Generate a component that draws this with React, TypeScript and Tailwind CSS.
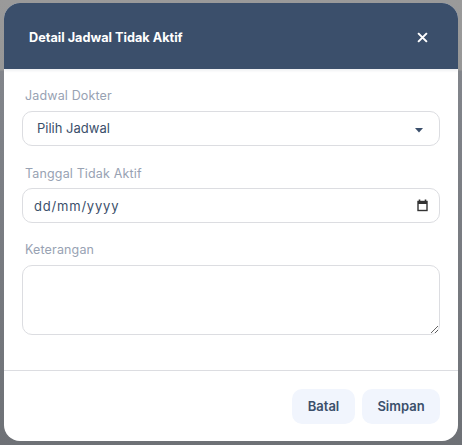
const labelClass = "block pl-[3px] text-[12.5px] leading-5 tracking-[0.15px] text-[#98a2b3]";
const fieldClass = "w-full rounded-[10px] border border-[#dcdde1] bg-white text-[13px] text-[#3b4f6b] outline-none";

export default function App() {
  return (
    <div className="h-[445px] w-[462px] overflow-hidden bg-[linear-gradient(#9a9a9a_0px,#979797_70px,#82858b_71px,#6e7176_445px)] pt-[3px] pl-[4px] font-['Inter','Liberation_Sans',sans-serif]">
      <div className="flex h-[438px] w-[454px] flex-col overflow-hidden rounded-[16px] bg-white">
        <div className="flex h-[66px] items-center justify-between bg-[#3b4f6b] pt-[3px] pr-[30px] pl-[25px] shadow-[0_2px_2px_rgba(59,79,107,0.08)]">
          <span className="text-[12.7px] font-bold text-white">Detail Jadwal Tidak Aktif</span>
          <svg width="11" height="11" viewBox="0 0 12 12" fill="none" stroke="white" strokeWidth="2.2">
            <path d="M1.2 1.2 10.8 10.8M10.8 1.2 1.2 10.8" />
          </svg>
        </div>

        <div className="flex flex-1 flex-col px-[18px] pt-[17px]">
          <label className={labelClass}>Jadwal Dokter</label>
          <div className="relative mt-[5px]">
            <select className={`${fieldClass} h-[35px] appearance-none pl-[14px] text-[12.8px]`}>
              <option>Pilih Jadwal</option>
            </select>
            <svg className="absolute top-[17px] right-[17px]" width="8" height="5" viewBox="0 0 8 5" fill="#3b4f6b">
              <path d="M0 0h8L4 4.5z" />
            </svg>
          </div>

          <label className={`${labelClass} mt-[18px]`}>Tanggal Tidak Aktif</label>
          <div className="relative mt-[4px]">
            <input
              type="text"
              placeholder="dd/mm/yyyy"
              className={`${fieldClass} h-[35px] pr-[30px] pl-[11px] tracking-[0.8px] placeholder:text-[#3b4f6b]`}
            />
            <svg className="absolute top-[11px] right-[12px]" width="11" height="13" viewBox="0 0 11 13" fill="none">
              <path d="M2.5 0.5v2M8.5 0.5v2" stroke="#333" strokeWidth="1.6" />
              <rect x="1" y="2.5" width="9" height="9" stroke="#333" strokeWidth="1.4" />
              <path d="M1 4h9" stroke="#333" strokeWidth="2" />
            </svg>
          </div>

          <label className={`${labelClass} mt-[17px]`}>Keterangan</label>
          <textarea className={`${fieldClass} mt-[5px] h-[70px] px-[14px] py-2`} />
        </div>

        <div className="flex h-[71px] items-start justify-end gap-[7px] border-t border-[#dcdde1] pt-[18px] pr-[18px]">
          <button className="h-[35px] w-[63px] rounded-[10px] bg-[#f1f5fd] text-[13px] font-semibold text-[#3b4f6b]">Batal</button>
          <button className="h-[35px] w-[78px] rounded-[10px] bg-[#f1f5fd] text-[13px] font-semibold text-[#3b4f6b]">Simpan</button>
        </div>
      </div>
    </div>
  );
}
